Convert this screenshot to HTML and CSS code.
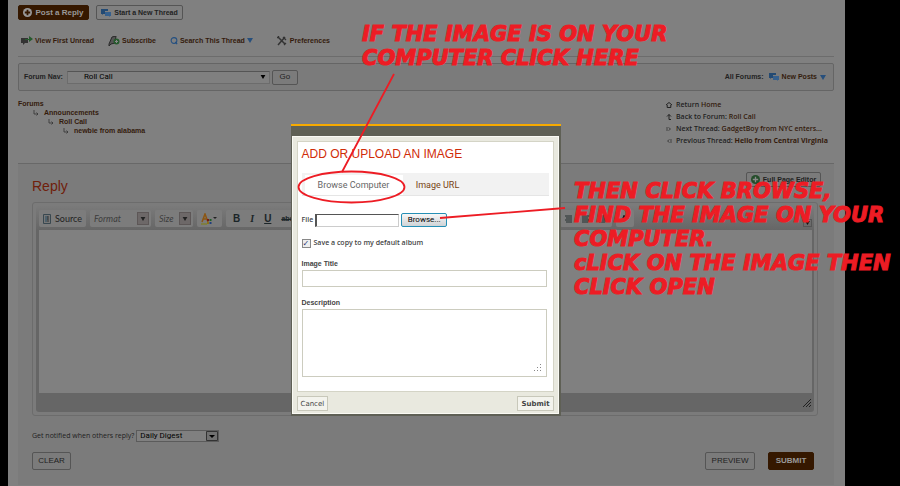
FILE: index.html
```html
<!DOCTYPE html>
<html lang="en">
<head>
<meta charset="utf-8">
<title>Roll Call - Post a Reply</title>
<link rel="stylesheet" href="styles.css">
</head>
<body>
<svg class="defs" aria-hidden="true">
  <symbol id="chat" viewBox="0 0 10 8"><path d="M0 0h7v2H4v3H2L1 6V5H0z" fill="#234a73"/><path d="M4 3h6v4H9v1L8 7H4z" fill="#36608d"/></symbol>
  <symbol id="down" viewBox="0 0 6 5"><path d="M0 0h6L3 5z"/></symbol>
  <symbol id="branch" viewBox="0 0 6 6"><path d="M1 0v4h4M3.500 2.500L5 4 3.500 5.500" fill="none" stroke="#333" stroke-width=".8"/></symbol>
</svg>
<div class="page">
  <header class="actions">
    <button class="btn post"><svg viewBox="0 0 10 10" width="9" height="9"><circle cx="5" cy="5" r="5" fill="#999"/><path d="M5 2v6M2 5h6" stroke="#351800" stroke-width="2"/></svg>Post a Reply</button>
    <button class="btn start"><svg width="10" height="8"><use href="#chat"/></svg>Start a New Thread</button>
  </header>
  <nav class="tools">
    <a href="#"><svg viewBox="0 0 12 10" width="12" height="10"><path d="M0 2h7v5H4L2 9V7H0z" fill="#333"/><path d="M4 3h4V0l4 3-4 3V4H4z" fill="#265a2d"/></svg>View First Unread</a>
    <a href="#"><svg viewBox="0 0 12 10" width="12" height="10"><path d="M1 8L4 1l4-1-1 7-4 1-2 2z" fill="#555" stroke="#282828"/><circle cx="8.500" cy="5.500" r="3" fill="#265a2d"/><path d="M8.500 4v3M7 5.500h3" stroke="#888"/></svg>Subscribe</a>
    <a href="#"><svg viewBox="0 0 9 9" width="8" height="9"><circle cx="4.500" cy="4.500" r="3.200" fill="none" stroke="#234f80" stroke-width="1.200"/><path d="M6 6l2 2.500" stroke="#234f80" stroke-width="1.500"/></svg>Search This Thread<svg class="caret" width="6" height="5"><use href="#down"/></svg></a>
    <a href="#"><svg viewBox="0 0 10 10" width="10" height="10"><path d="M1 1l7 7M8 1L1 9" stroke="#333" stroke-width="1.500"/><path d="M6 1l3 3M0 2l2-2M7 9l2-2" stroke="#333" stroke-width="1.200"/></svg>Preferences</a>
  </nav>
  <form class="forum-nav">
    <label for="forum">Forum Nav:</label>
    <span class="pick nav-pick"><select id="forum"><option>Roll Call</option></select><svg width="6" height="4"><use href="#down"/></svg></span>
    <button class="btn go" type="button">Go</button>
    <span class="all"><b>All Forums:</b><a href="#"><svg width="10" height="8"><use href="#chat"/></svg>New Posts<svg class="caret" width="6" height="5"><use href="#down"/></svg></a></span>
  </form>
  <div class="trail">
    <ul class="crumbs">
      <li><a href="#">Forums</a></li>
      <li><svg width="6" height="6"><use href="#branch"/></svg><a href="#">Announcements</a></li>
      <li><svg width="6" height="6"><use href="#branch"/></svg><a href="#">Roll Call</a></li>
      <li><svg width="6" height="6"><use href="#branch"/></svg><a href="#">newbie from alabama</a></li>
    </ul>
    <ul class="jumps">
      <li><svg viewBox="0 0 6 6" width="6" height="6"><path d="M0 3l3-2.500L6 3M1.200 3v2.500h3.600V3" fill="none" stroke="#222"/></svg><span>Return <a href="#">Home</a></span></li>
      <li><svg viewBox="0 0 6 6" width="6" height="6"><path d="M5 5.500H3V.5M1 2.500l2-2 2 2" fill="none" stroke="#222"/></svg><span>Back to Forum: <a href="#">Roll Call</a></span></li>
      <li><svg viewBox="0 0 6 6" width="6" height="6"><path d="M1 1v4M2.500 1.500L4.500 3l-2 1.500" fill="none" stroke="#333" stroke-width=".8"/></svg><span>Next Thread: <a href="#">GadgetBoy from NYC enters...</a></span></li>
      <li><svg viewBox="0 0 6 6" width="6" height="6"><path d="M5 1v4M3.500 1.500L1.500 3l2 1.500" fill="none" stroke="#333" stroke-width=".8"/></svg><span>Previous Thread: <a class="strong" href="#">Hello from Central Virginia</a></span></li>
    </ul>
  </div>
  <main class="reply">
    <div class="reply-head">
      <h1>Reply</h1>
      <button class="btn full"><svg viewBox="0 0 10 10" width="9" height="9"><circle cx="5" cy="5" r="5" fill="#244d2a"/><path d="M5 2v6M2 5h6" stroke="#888" stroke-width="1.500"/></svg>Full Page Editor</button>
    </div>
    <div class="editor">
      <div class="editor-in">
        <div class="bar">
          <button class="tool source"><svg viewBox="0 0 8 10" width="8" height="10"><path d="M.5.500h7v9h-7z" fill="#777" stroke="#394850"/><path d="M2 3h3M2 5h3M2 7h2" stroke="#274c63"/><path d="M5 2v6" stroke="#333"/></svg>Source</button>
          <button class="tool drop format"><i>Format</i><span><svg width="6" height="4"><use href="#down"/></svg></span></button>
          <button class="tool drop size"><i>Size</i><span><svg width="6" height="4"><use href="#down"/></svg></span></button>
          <button class="tool color" aria-label="Text color"><svg viewBox="0 0 17 12" width="17" height="12"><path d="M1 9l3-8 3 8M2 6h4" fill="none" stroke="#8d5612" stroke-width="1.500"/><path d="M0 11h6" stroke="#80800b"/><path d="M6 6h2v2H6z" fill="#7c1717"/><path d="M8.500 6h2v2h-2z" fill="#1a5f25"/><path d="M6 9h2v2H6z" fill="#8b711a"/><path d="M8.500 9h2v2h-2z" fill="#20407d"/><path d="M12 4h4l-2 2z" fill="#222"/></svg></button>
          <div class="tool marks"><button><b>B</b></button><button><i class="serif">I</i></button><button><u>U</u></button><button><s>abc</s></button></div>
          <div class="tool aligns"><svg viewBox="0 0 42 8" width="42" height="8"><path d="M0 1h7M1 3h6M0 5h7M1 7h6M17 1h7M17 3h6M17 5h7M17 7h6M34 1h7M34 3h6M34 5h7M34 7h6" stroke="#263030"/></svg></div>
          <button class="tool media" aria-label="Media"><svg viewBox="0 0 8 7" width="8" height="7"><path d="M1 6l2-5 1 4 2-4 1 3" fill="none" stroke="#151515" stroke-width="1.500"/></svg></button>
          <button class="fold" aria-label="Collapse toolbar"><svg width="5" height="4"><use href="#down"/></svg></button>
        </div>
        <textarea class="canvas" aria-label="Reply text"></textarea>
        <div class="grip"><svg viewBox="0 0 9 9" width="9" height="9"><path d="M0 9l8-8M3 9l5-5M6 9l2-2" stroke="#222"/></svg></div>
      </div>
    </div>
    <div class="notify"><label for="digest">Get notified when others reply?</label><span class="pick digest"><select id="digest"><option>Daily Digest</option></select><svg viewBox="0 0 12 10" width="12" height="10"><path d="M.5.500h11v9H.5z" fill="#707070" stroke="#333"/><path d="M3 4h6L6 7z"/></svg></span></div>
    <div class="buttons"><button class="btn big">CLEAR</button><button class="btn big preview">PREVIEW</button><button class="btn big send">SUBMIT</button></div>
  </main>

  <form class="dialog" role="dialog" aria-labelledby="dlg-title">
    <div class="dialog-in">
      <div class="sheet">
        <h2 id="dlg-title">ADD OR UPLOAD AN IMAGE</h2>
        <div class="tabs"><button type="button" class="on">Browse Computer</button><button type="button">Image URL</button></div>
        <div class="file"><label for="path">File</label><input id="path" type="text"><button type="button">Browse...</button></div>
        <label class="keep"><input type="checkbox" checked>Save a copy to my default album</label>
        <label class="head" for="title">Image Title</label>
        <input class="title" id="title" type="text">
        <label class="head" for="desc">Description</label>
        <div class="desc"><textarea id="desc"></textarea><svg viewBox="0 0 8 8" width="8" height="8"><path d="M6 0h1v1H6zM3 3h1v1H3zM6 3h1v1H6zM0 6h1v1H0zM3 6h1v1H3zM6 6h1v1H6z" fill="#888"/></svg></div>
      </div>
      <div class="dialog-foot"><button type="button">Cancel</button><button type="button"><b>Submit</b></button></div>
    </div>
  </form>

  <svg class="ink" viewBox="0 0 900 486" width="900" height="486" aria-hidden="true"><g fill="none" stroke="#ed1c24" stroke-width="1.800"><path d="M394 74L342 172M440 218L565 208"/><ellipse cx="351.500" cy="187" rx="53" ry="15.500"/></g></svg>
  <p class="note note-a">IF THE IMAGE IS ON YOUR<br>COMPUTER CLICK HERE</p>
  <p class="note note-b">THEN CLICK BROWSE,<br>FIND THE IMAGE ON YOUR<br>COMPUTER.<br>cLICK ON THE IMAGE THEN<br>CLICK OPEN</p>
</div>
</body>
</html>
```
FILE: styles.css
```css
* { box-sizing: border-box; }
body { margin: 0; background: #000; font: 600 7px/10px "Open Sans", "Liberation Sans", sans-serif; color: #222; }
button, input, select, textarea { font: inherit; color: inherit; margin: 0; padding: 0; border: 0; background: none; border-radius: 0; }
svg { display: block; flex: none; }
a { color: #341b0c; text-decoration: none; }
ul { list-style: none; margin: 0; padding: 0; }
.defs { position: absolute; width: 0; height: 0; }

.page { position: relative; margin: 0 55px 0 8px; padding: 5px 11px 0 10px; min-height: 100vh; background: #808080; }
.btn { display: flex; align-items: center; justify-content: center; gap: 3px; border: 1px solid #555; border-radius: 2px; }
.actions { display: flex; gap: 7px; }
.actions .btn { height: 15px; font: bold 8px/10px "Liberation Sans", sans-serif; }
.actions .post { width: 71px; background: #351800; border-color: #351800; color: #999; }
.actions .start { width: 87px; font-size: 7px; color: #222; }

.tools { display: flex; align-items: center; height: 37px; padding: 5px 3px 0; gap: 14px; border-bottom: 1px solid #6c6c6c; }
.tools a { display: flex; align-items: center; gap: 2px; font: bold 7px/10px "Liberation Sans", sans-serif; }
.tools a:last-child { margin-left: 10px; gap: 3px; }
.caret { fill: #274f7c; }

.forum-nav { display: flex; align-items: center; height: 28px; margin-top: 6px; padding: 0 7px 0 5px; border: 1px solid #656565; border-radius: 2px; background: #7b7b7b; }
.forum-nav label, .all { font: bold 7px/10px "Liberation Sans", sans-serif; }
.pick { display: flex; align-items: center; position: relative; font: 8px/10px Roboto, sans-serif; }
.pick select { appearance: none; width: 100%; height: 100%; }
.pick svg { position: absolute; right: 3px; fill: #000; }
.nav-pick { width: 203px; height: 13px; margin: 0 2px 0 4px; border: 1px solid #6c6c6c; border-top-color: #555; background: #808080; color: #000; }
.nav-pick select { padding-left: 16px; }
.go { width: 26px; height: 15px; font: 8px/10px "Liberation Sans", sans-serif; }
.all { display: flex; align-items: center; gap: 5px; margin-left: auto; }
.all a { display: flex; align-items: center; gap: 3px; }

.trail { display: flex; justify-content: space-between; height: 72px; padding-top: 8px; }
.crumbs { font: bold 7px/9px "Liberation Sans", sans-serif; }
.crumbs li { display: flex; align-items: center; gap: 5px; }
.crumbs li:nth-child(2) { padding-left: 15px; }
.crumbs li:nth-child(3) { padding-left: 30px; }
.crumbs li:nth-child(4) { padding-left: 45px; }
.jumps { width: 168px; line-height: 12px; white-space: nowrap; }
.jumps li { display: flex; align-items: center; gap: 4px; }
.jumps .strong { font-weight: 700; }

.reply { border-top: 1px solid #686868; background: #7b7b7b; padding: 8px 16px 15px 14px; }
.reply-head { display: flex; justify-content: space-between; height: 30px; }
h1 { margin: 5px 0 0; font: 14px/18px "Liberation Sans", sans-serif; color: #70200b; }
.full { width: 75px; height: 15px; margin-right: -3px; font: bold 7px/10px "Liberation Sans", sans-serif; color: #222; }
.editor { padding: 3px; border: 1px solid #6c6c6c; border-radius: 3px; }
.editor-in { display: flex; flex-direction: column; height: 206px; padding: 0 2px 0 3px; border-radius: 3px; background: linear-gradient(#7a7a7a, #666 24px, #666); }
.bar { display: flex; align-items: center; gap: 4px; height: 24px; padding-top: 1px; }
.tool { display: flex; align-items: center; height: 17px; border-radius: 2px; background: #7c7c7c; font: 9px/12px Lato, sans-serif; }
.source { width: 47px; gap: 4px; justify-content: center; }
.drop { justify-content: space-between; padding: 0 2px 0 4px; color: #3c3c3c; }
.drop span { display: grid; place-items: center; width: 12px; height: 13px; border: 1px solid #5d5757; background: #6d6868; fill: #222; }
.format { width: 61px; }
.size { width: 38px; }
.color { width: 25px; justify-content: center; }
.marks { width: 102px; padding-left: 7px; gap: 10px; font: bold 10px/12px "Liberation Sans", sans-serif; color: #1b2528; }
.marks s { font-size: 7px; }
.serif { font-family: "Liberation Serif", serif; font-weight: bold; }
.aligns { width: 52px; margin-left: 228px; justify-content: center; }
.media { width: 18px; justify-content: center; }
.fold { display: grid; place-items: center; width: 9px; height: 8px; margin: 8px 0 0 auto; border: 1px solid #555; fill: #111; }
.canvas { display: block; flex: 1; width: 100%; resize: none; background: #808080; }
.grip { display: flex; justify-content: flex-end; align-items: center; height: 19px; }
.notify { display: flex; align-items: center; gap: 2px; height: 12px; margin-top: 14px; font-weight: 400; }
.digest { width: 83px; height: 12px; border: 1px solid #5b5b5b; background: #808080; color: #000; }
.digest select { padding-left: 3px; }
.digest svg { right: 0; }
.buttons { display: flex; gap: 13px; margin-top: 10px; padding-right: 4px; }
.big { height: 18px; width: 39px; font: 8px/10px "Liberation Sans", sans-serif; }
.preview { width: 50px; margin-left: auto; }
.send { width: 46px; background: #351800; border-color: #351800; color: #999; font-weight: bold; }

.dialog { position: absolute; top: 124px; left: 50%; width: 270px; margin-left: -136px; border-top: 2px solid #f6aa00; background: #5f6055; padding: 10px 2px 2px 1px; }
.dialog-in { padding: 4px 4px 2px; border: 1px solid #fafaf4; background: #e9e9df; color: #444; }
.sheet { display: flex; flex-direction: column; padding: 5px 6px 14px 4px; border: 1px solid #d4d4c6; background: #fff; }
h2 { margin: 0; font: 12px/14px "Liberation Sans", sans-serif; color: #d02c08; }
.tabs { display: flex; height: 23px; margin-top: 12px; padding: 2px 3px 0; margin-right: -2px; border-bottom: 1px solid #e5e5e5; background: #f2f2f2; font: 9px/12px Roboto, sans-serif; }
.tabs button { width: 70px; color: #774414; }
.tabs .on { width: 98px; background: #fff; color: #666; }
.file { display: flex; align-items: center; gap: 2px; height: 14px; margin-top: 17px; }
.file input { width: 84px; height: 13px; border: 1px solid #ccc; border-top-color: #555; border-left: 2px solid #555; }
.file button { width: 46px; height: 14px; border: 1px solid #258fb5; border-radius: 2px; background: linear-gradient(#f7f7f7, #cfd3d6); color: #000; font: 8px/10px Roboto, sans-serif; }
.keep { display: flex; align-items: center; gap: 3px; height: 10px; margin-top: 11px; }
.keep input { appearance: none; width: 9px; height: 9px; border: 1px solid #888; background: #eee; }
.keep input:checked::before { content: "✓"; display: block; font: bold 8px/7px "DejaVu Sans", sans-serif; color: #26336e; }
.head { margin-top: 11px; font: bold 7px/10px "Liberation Sans", sans-serif; }
.title { height: 17px; margin-top: 1px; border: 1px solid #ccccbf; }
.desc { position: relative; height: 68px; margin-top: 1px; border: 1px solid #ccccbf; }
.desc textarea { display: block; width: 100%; height: 100%; resize: none; }
.desc svg { position: absolute; right: 4px; bottom: 4px; }
.dialog-foot { display: flex; justify-content: space-between; padding-top: 4px; }
.dialog-foot button { height: 15px; padding: 0 3px; border: 1px solid #c8c8ba; background: #f3f3ed; font: 7px/10px "DejaVu Sans", sans-serif; }

.ink { position: absolute; top: 0; left: -8px; pointer-events: none; }
.note { position: absolute; margin: 0; font: italic bold 21px/24px "DejaVu Sans", sans-serif; color: #ed1c24; -webkit-text-stroke: 1px #ed1c24; white-space: nowrap; }
.note-a { left: 354px; top: 22px; }
.note-b { left: 566px; top: 179px; }
```
